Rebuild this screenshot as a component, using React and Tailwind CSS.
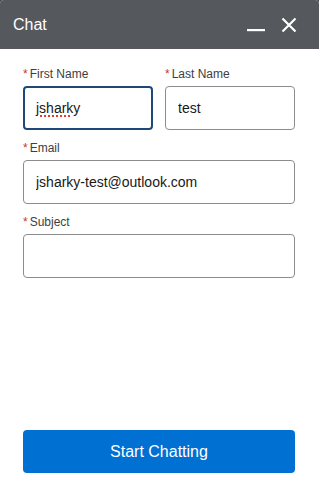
import React from 'react';

const Label = ({ children }) => (
  <label className="flex h-[19px] items-start text-[12px] leading-[14px] text-[#3e3e3c]">
    <span className="mr-[2px] text-[#c23934]">*</span>
    {children}
  </label>
);

const Field = ({ label, value, focused, misspelled, className = '' }) => (
  <div className={'flex flex-col ' + className}>
    <Label>{label}</Label>
    {misspelled ? (
      <div
        className={
          'flex h-[44px] w-full items-center rounded-[4px] bg-white text-[14px] text-[#181818] ' +
          (focused ? 'border-2 border-[#1b4a7a] px-[11px]' : 'border border-[#8c8c8c] px-[12px]')
        }
      >
        <span className="underline decoration-dotted decoration-[#e53935] decoration-2 underline-offset-[3px]">{value}</span>
      </div>
    ) : (
      <input
        readOnly
        value={value}
        className={
          'h-[44px] w-full rounded-[4px] bg-white text-[14px] text-[#181818] outline-none ' +
          (focused ? 'border-2 border-[#1b4a7a] px-[11px]' : 'border border-[#8c8c8c] px-[12px]')
        }
      />
    )}
  </div>
);

const App = () => {
  return (
    <div className="h-[498px] w-[319px] bg-[#34425a]" style={{ fontFamily: '"Liberation Sans", Arial, sans-serif' }}>
      <div className="flex h-full flex-col overflow-hidden rounded-t-[4px] bg-white">
        <div className="flex h-[49px] shrink-0 items-center justify-between bg-[#55585c] pl-[13px] pr-[22px]">
          <span className="text-[16px] text-white">Chat</span>
          <div className="flex items-center gap-[16px]">
            <svg width="18" height="16" viewBox="0 0 18 16">
              <rect x="0" y="12" width="18" height="2.2" fill="white" />
            </svg>
            <svg width="16" height="16" viewBox="0 0 16 16">
              <path d="M1.5 1.5 L14.5 14.5 M14.5 1.5 L1.5 14.5" stroke="white" strokeWidth="2.2" />
            </svg>
          </div>
        </div>

        <div className="flex flex-1 flex-col pl-[23px] pr-[24px] pt-[18px] pb-[25px]">
          <div className="grid grid-cols-2 gap-x-[12px]">
            <Field label="First Name" value="jsharky" focused misspelled />
            <Field label="Last Name" value="test" />
          </div>
          <Field label="Email" value="jsharky-test@outlook.com" className="mt-[11px]" />
          <Field label="Subject" value="" className="mt-[11px]" />

          <button className="mt-auto h-[43px] w-full rounded-[4px] bg-[#0070d2] text-[16px] text-white">
            Start Chatting
          </button>
        </div>
      </div>
    </div>
  );
};

export default App;
